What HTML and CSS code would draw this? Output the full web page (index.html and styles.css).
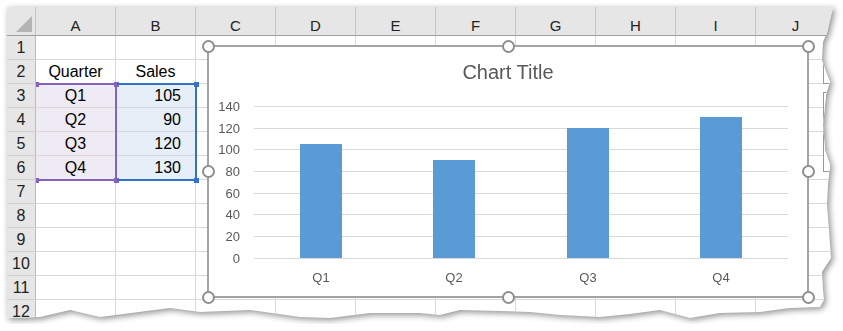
FILE: index.html
```html
<!DOCTYPE html>
<html lang="en">
<head>
    <meta charset="utf-8">
    <title>Chart</title>
    <link rel="stylesheet" href="styles.css">
</head>
<body>
    <div class="frame">
        <div class="sheet">
            <div class="corner"><span></span></div>
            <div class="ch">A</div><div class="ch">B</div><div class="ch">C</div><div class="ch">D</div><div class="ch">E</div><div class="ch">F</div><div class="ch">G</div><div class="ch">H</div><div class="ch">I</div><div class="ch">J</div>

            <div class="rh">1</div><div class="c"></div><div class="c"></div><div class="c"></div><div class="c"></div><div class="c"></div><div class="c"></div><div class="c"></div><div class="c"></div><div class="c"></div><div class="c"></div>
            <div class="rh">2</div><div class="c">Quarter</div><div class="c">Sales</div><div class="c"></div><div class="c"></div><div class="c"></div><div class="c"></div><div class="c"></div><div class="c"></div><div class="c"></div><div class="c"></div>
            <div class="rh">3</div><div class="c sel-a">Q1</div><div class="c sel-b num">105</div><div class="c"></div><div class="c"></div><div class="c"></div><div class="c"></div><div class="c"></div><div class="c"></div><div class="c"></div><div class="c"></div>
            <div class="rh">4</div><div class="c sel-a">Q2</div><div class="c sel-b num">90</div><div class="c"></div><div class="c"></div><div class="c"></div><div class="c"></div><div class="c"></div><div class="c"></div><div class="c"></div><div class="c"></div>
            <div class="rh">5</div><div class="c sel-a">Q3</div><div class="c sel-b num">120</div><div class="c"></div><div class="c"></div><div class="c"></div><div class="c"></div><div class="c"></div><div class="c"></div><div class="c"></div><div class="c"></div>
            <div class="rh">6</div><div class="c sel-a">Q4</div><div class="c sel-b num">130</div><div class="c"></div><div class="c"></div><div class="c"></div><div class="c"></div><div class="c"></div><div class="c"></div><div class="c"></div><div class="c"></div>
            <div class="rh">7</div><div class="c"></div><div class="c"></div><div class="c"></div><div class="c"></div><div class="c"></div><div class="c"></div><div class="c"></div><div class="c"></div><div class="c"></div><div class="c"></div>
            <div class="rh">8</div><div class="c"></div><div class="c"></div><div class="c"></div><div class="c"></div><div class="c"></div><div class="c"></div><div class="c"></div><div class="c"></div><div class="c"></div><div class="c"></div>
            <div class="rh">9</div><div class="c"></div><div class="c"></div><div class="c"></div><div class="c"></div><div class="c"></div><div class="c"></div><div class="c"></div><div class="c"></div><div class="c"></div><div class="c"></div>
            <div class="rh">10</div><div class="c"></div><div class="c"></div><div class="c"></div><div class="c"></div><div class="c"></div><div class="c"></div><div class="c"></div><div class="c"></div><div class="c"></div><div class="c"></div>
            <div class="rh">11</div><div class="c"></div><div class="c"></div><div class="c"></div><div class="c"></div><div class="c"></div><div class="c"></div><div class="c"></div><div class="c"></div><div class="c"></div><div class="c"></div>
            <div class="rh">12</div><div class="c"></div><div class="c"></div><div class="c"></div><div class="c"></div><div class="c"></div><div class="c"></div><div class="c"></div><div class="c"></div><div class="c"></div><div class="c"></div>

            <!-- range finder boxes -->
            <div class="range range-a">
                <span class="sq tl"></span><span class="sq tr"></span><span class="sq bl"></span><span class="sq br"></span>
            </div>
            <div class="range range-b">
                <span class="sq tr"></span><span class="sq br"></span>
            </div>

            <!-- side buttons of the chart, mostly torn off -->
            <div class="chart-btn btn-1"></div>
            <div class="chart-btn btn-2"></div>

            <div class="chart">
                <svg width="598" height="249" viewBox="0 0 598 249">
                    <text class="title" x="299" y="32" text-anchor="middle">Chart Title</text>
                    <g class="grid">
                        <line x1="45" x2="579" y1="59.5" y2="59.5"/>
                        <line x1="45" x2="579" y1="81.5" y2="81.5"/>
                        <line x1="45" x2="579" y1="102.5" y2="102.5"/>
                        <line x1="45" x2="579" y1="124.5" y2="124.5"/>
                        <line x1="45" x2="579" y1="146.5" y2="146.5"/>
                        <line x1="45" x2="579" y1="167.5" y2="167.5"/>
                        <line x1="45" x2="579" y1="189.5" y2="189.5"/>
                        <line x1="45" x2="579" y1="211.5" y2="211.5"/>
                    </g>
                    <g class="axis" text-anchor="end">
                        <text x="31" y="64">140</text>
                        <text x="31" y="86">120</text>
                        <text x="31" y="107">100</text>
                        <text x="31" y="129">80</text>
                        <text x="31" y="151">60</text>
                        <text x="31" y="172">40</text>
                        <text x="31" y="194">20</text>
                        <text x="31" y="216">0</text>
                    </g>
                    <g class="bars">
                        <rect x="91" y="97" width="42" height="114"/>
                        <rect x="224" y="113" width="42" height="98"/>
                        <rect x="358" y="81" width="42" height="130"/>
                        <rect x="491" y="70" width="42" height="141"/>
                    </g>
                    <g class="axis" text-anchor="middle">
                        <text x="112" y="235">Q1</text>
                        <text x="245" y="235">Q2</text>
                        <text x="379" y="235">Q3</text>
                        <text x="512" y="235">Q4</text>
                    </g>
                </svg>
                <span class="knob k-tl"></span><span class="knob k-tc"></span><span class="knob k-tr"></span>
                <span class="knob k-ml"></span><span class="knob k-mr"></span>
                <span class="knob k-bl"></span><span class="knob k-bc"></span><span class="knob k-br"></span>
            </div>
        </div>
    </div>
</body>
</html>
```

FILE: styles.css
```css
body {
    margin: 0;
    background: #fff;
    font-family: "Liberation Sans", Arial, sans-serif;
    color: #000;
}

.frame {
    width: 836px;
    padding: 7px 0 0 7px;
    filter: drop-shadow(2px 2px 3px rgba(0, 0, 0, 0.45));
}

.sheet {
    position: relative;
    display: grid;
    grid-template-columns: 29px repeat(10, 80px);
    grid-template-rows: 29px repeat(12, 24px);
    width: 829px;
    background: #fff;
    clip-path: polygon(0 0, 826px 0, 823px 13px, 820px 26px, 816px 35px, 815px 53px, 819px 65px, 823px 75px,
        819px 88px, 818px 98px, 816px 118px, 818px 143px, 823px 158px, 821px 178px, 820px 198px, 822px 223px,
        824px 251px, 815px 265px, 816px 283px, 817px 293px, 813px 300px,
        783px 301px, 753px 305px, 713px 306px, 683px 311px, 653px 303px, 623px 307px, 593px 310px, 553px 308px,
        523px 305px, 493px 304px, 453px 303px, 433px 308px, 413px 306px, 363px 306px, 323px 311px, 293px 310px,
        243px 303px, 193px 305px, 163px 301px, 93px 310px, 63px 303px, 33px 310px, 0 311px);
}

/* headers */
.corner {
    display: flex;
    align-items: flex-end;
    justify-content: flex-end;
    padding: 0 3px 3px 0;
    background: #e6e6e6;
    border-right: 1px solid #c4c4c4;
    border-bottom: 1px solid #9e9e9e;
}

.corner span {
    width: 16px;
    height: 16px;
    background: #b4b4b4;
    clip-path: polygon(100% 0, 100% 100%, 0 100%);
}

.ch {
    display: flex;
    align-items: center;
    justify-content: center;
    padding-top: 8px;
    font-size: 15px;
    color: #222;
    background: #e6e6e6;
    border-right: 1px solid #c4c4c4;
    border-bottom: 1px solid #9e9e9e;
}

.rh {
    display: flex;
    align-items: center;
    justify-content: center;
    font-size: 16px;
    color: #222;
    background: #e6e6e6;
    border-right: 1px solid #bdbdbd;
    border-bottom: 1px solid #d2d2d2;
}

/* cells */
.c {
    display: flex;
    align-items: center;
    justify-content: center;
    font-size: 16px;
    border-right: 1px solid #d9d9d9;
    border-bottom: 1px solid #d9d9d9;
}

.c.num {
    justify-content: flex-end;
    padding-right: 14px;
}

.sel-a {
    background: #efebf5;
}

.sel-b {
    background: #e6eef8;
}

/* range finder */
.range {
    position: absolute;
    top: 76px;
    width: 80px;
    height: 98px;
    box-sizing: border-box;
    border-top: 2px solid;
    border-right: 2px solid;
    border-bottom: 2px solid;
}

.range-a {
    left: 30px;
    border-color: #8461c2;
    color: #8461c2;
}

.range-b {
    left: 110px;
    border-color: #3471cb;
    color: #3471cb;
}

.sq {
    position: absolute;
    width: 5px;
    height: 5px;
    background: currentColor;
}

.sq.tl { left: -1px; top: -3.5px; }
.sq.bl { left: -1px; bottom: -3.5px; }
.sq.tr { right: -3.5px; top: -3.5px; }
.sq.br { right: -3.5px; bottom: -3.5px; }

.range-a .sq.tl,
.range-a .sq.bl {
    width: 3px;
}

/* chart */
.chart {
    position: absolute;
    left: 200px;
    top: 38px;
    width: 602px;
    height: 253px;
    box-sizing: border-box;
    border: 2px solid #a3a3a3;
    background: #fff;
}

.chart svg {
    display: block;
}

.chart text {
    font-family: "Liberation Sans", Arial, sans-serif;
    fill: #595959;
}

.chart .title {
    font-size: 20px;
}

.chart .axis {
    font-size: 13px;
}

.chart .grid line {
    stroke: #d9d9d9;
    stroke-width: 1;
}

.chart .bars rect {
    fill: #5b9bd5;
}

.knob {
    position: absolute;
    width: 13px;
    height: 13px;
    margin: -6px 0 0 -6px;
    box-sizing: border-box;
    border: 2px solid #8e8e8e;
    border-radius: 50%;
    background: #fff;
}

.k-tl { left: -1px; top: -1px; }
.k-tc { left: 299px; top: -1px; }
.k-tr { left: 599px; top: -1px; }
.k-ml { left: -1px; top: 124px; }
.k-mr { left: 599px; top: 124px; }
.k-bl { left: -1px; top: 250px; }
.k-bc { left: 299px; top: 250px; }
.k-br { left: 599px; top: 250px; }

.chart-btn {
    position: absolute;
    left: 816px;
    width: 26px;
    box-sizing: border-box;
    border: 1px solid #9a9a9a;
    background: #fff;
}

.btn-1 {
    top: 55px;
    height: 22px;
}

.btn-2 {
    top: 85px;
    height: 80px;
}
```
